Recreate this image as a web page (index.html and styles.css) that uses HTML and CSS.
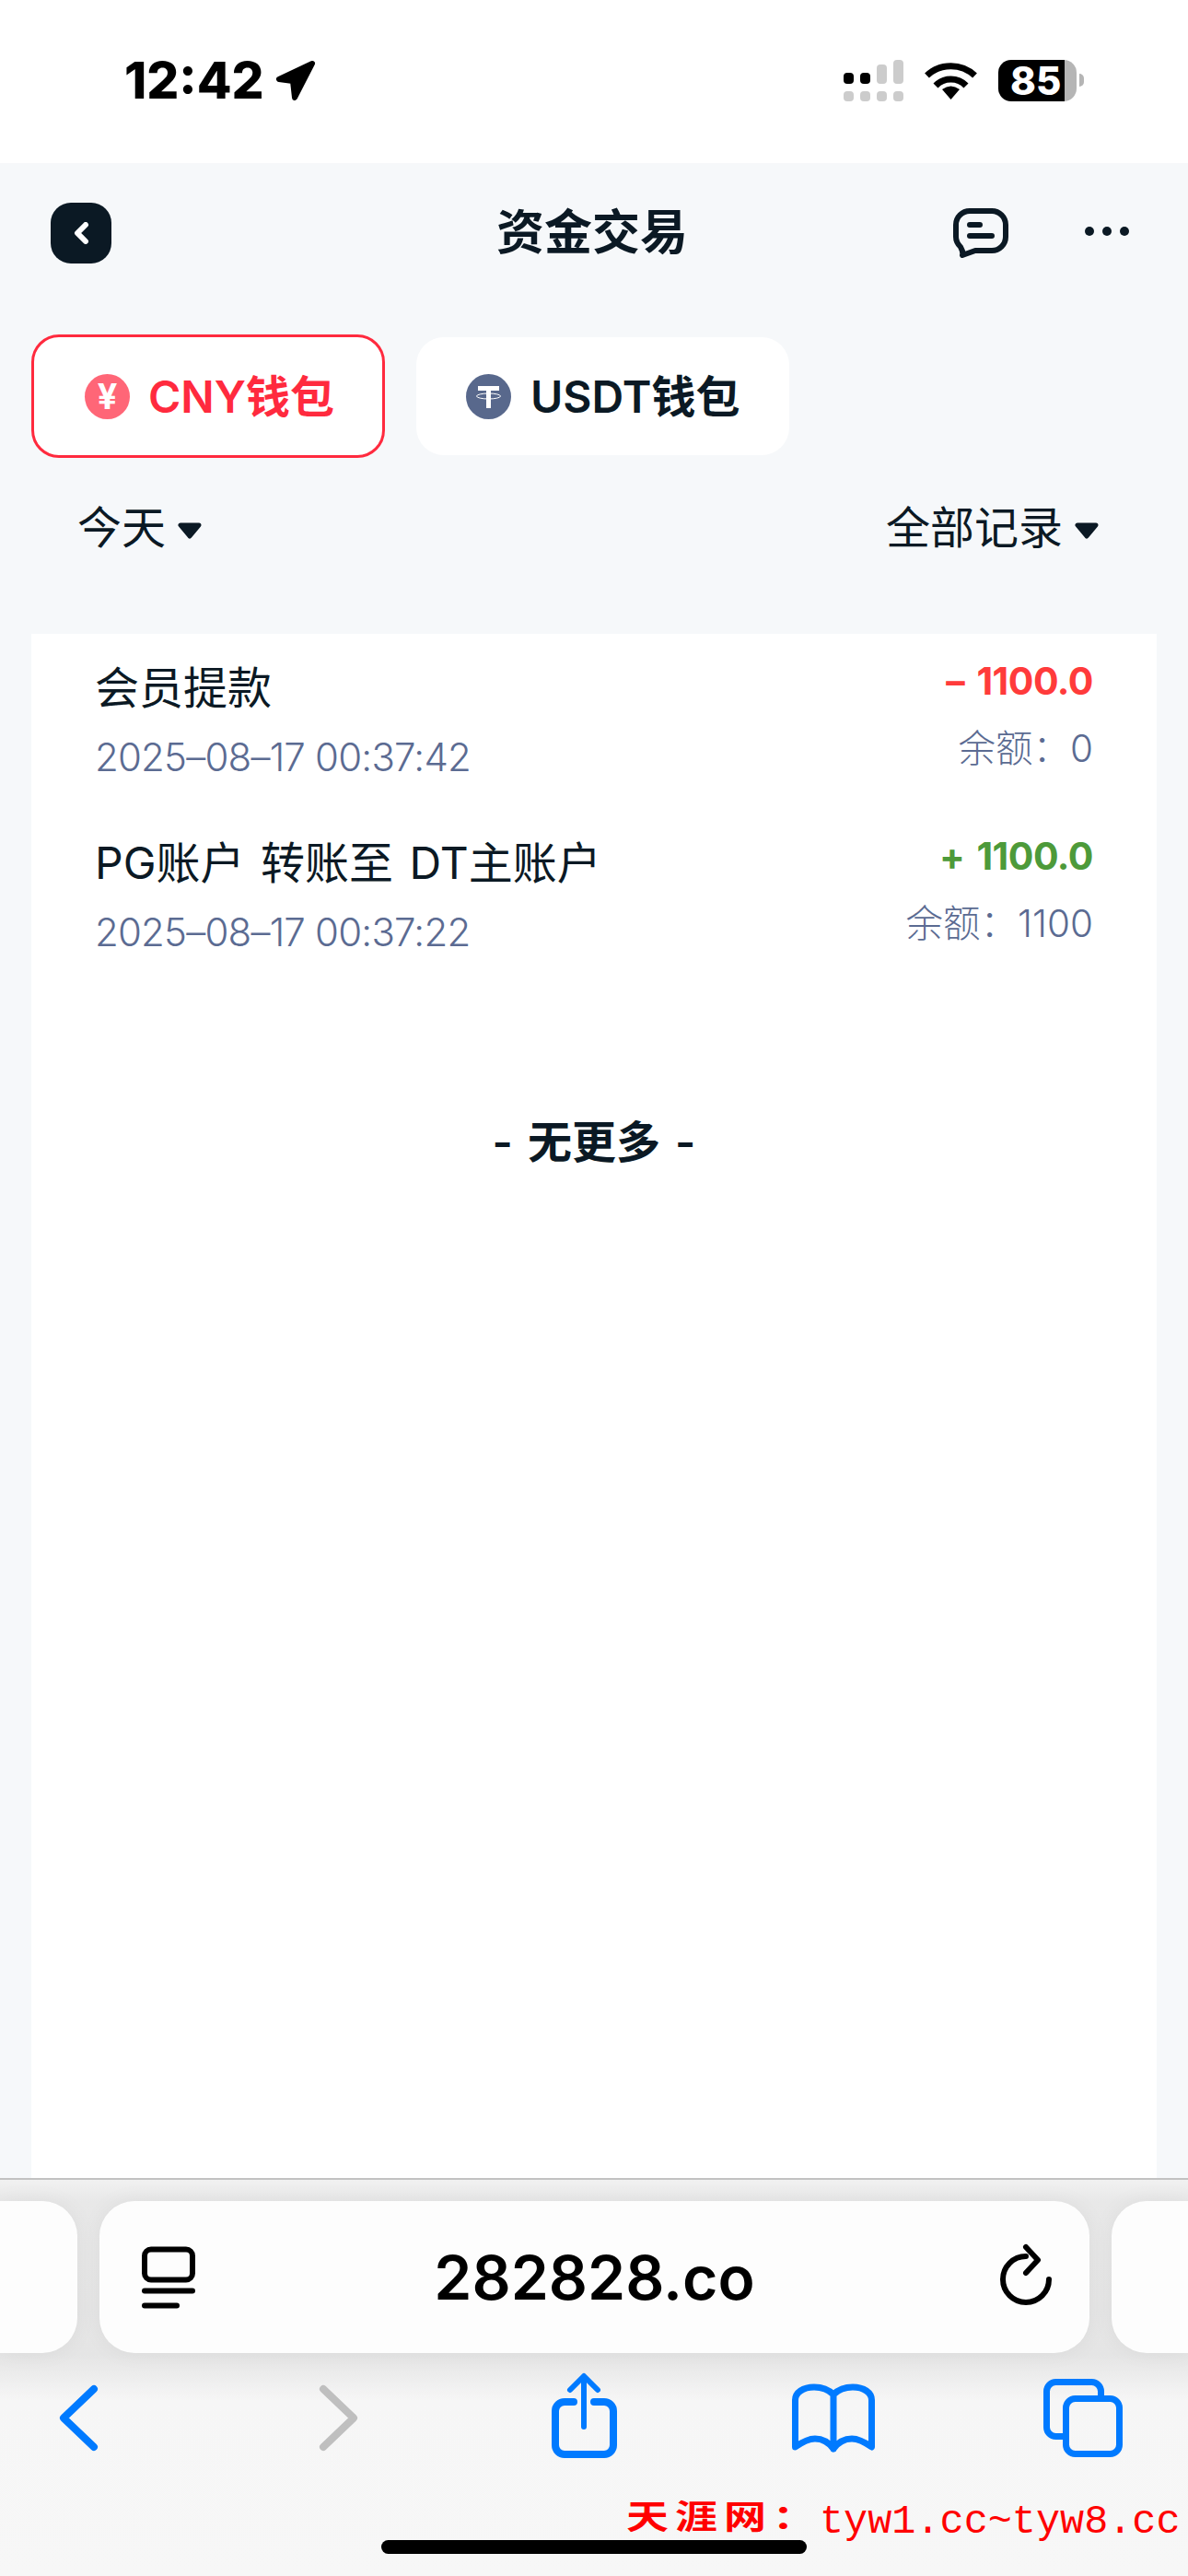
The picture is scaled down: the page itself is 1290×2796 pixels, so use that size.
FILE: index.html
```html
<!DOCTYPE html>
<html lang="zh-CN">
<head>
    <meta charset="UTF-8">
    <meta name="viewport" content="width=device-width, initial-scale=1.0">
    <title>资金交易</title>
    <link rel="stylesheet" href="styles.css">
</head>
<body>
    <div class="status-bar">
        <span class="clock">12:42</span>
        <svg class="location" viewBox="0 0 46 44"><polygon points="41,4 5,21 20,23 22,41"/></svg>
        <div class="status-right">
            <svg class="signal" viewBox="0 0 65 45">
                <rect x="0" y="14" width="11" height="12" rx="4" fill="#000"/>
                <rect x="18" y="14" width="11" height="12" rx="4" fill="#000"/>
                <rect x="36" y="5" width="11" height="21" rx="4" fill="#ccc"/>
                <rect x="54" y="0" width="11" height="26" rx="4" fill="#ccc"/>
                <rect x="0" y="34" width="11" height="11" rx="4" fill="#ccc"/>
                <rect x="18" y="34" width="11" height="11" rx="4" fill="#ccc"/>
                <rect x="36" y="34" width="11" height="11" rx="4" fill="#ccc"/>
                <rect x="54" y="34" width="11" height="11" rx="4" fill="#ccc"/>
            </svg>
            <svg class="wifi" viewBox="0 0 57 42">
                <path d="M2.5 16 A38 38 0 0 1 54.5 16" fill="none" stroke="#000" stroke-width="7"/>
                <path d="M12 27 A23 23 0 0 1 45 27" fill="none" stroke="#000" stroke-width="7"/>
                <path d="M28.5 42 L19 31 Q28.5 24 38 31 Z" fill="#000"/>
            </svg>
            <div class="battery">
                <div class="battery-body">85</div>
                <div class="battery-tip"></div>
            </div>
        </div>
    </div>

    <div class="page">
        <div class="header">
            <div class="back-button">
                <svg viewBox="0 0 17 24"><path d="M13 3 L4 12 L13 21" fill="none" stroke="#fff" stroke-width="6" stroke-linecap="round" stroke-linejoin="round"/></svg>
            </div>
            <h1 class="title">资金交易</h1>
            <div class="header-actions">
                <svg class="chat-icon" viewBox="0 0 60 54">
                    <path d="M18 3H42a15 15 0 0 1 15 15V31a15 15 0 0 1-15 15H24L10 51C11 48 10 46 8 42C4 38 3 35 3 31V18A15 15 0 0 1 18 3Z" fill="none" stroke="#0b1924" stroke-width="6" stroke-linejoin="round"/>
                    <path d="M18 18H29M18 30H42" fill="none" stroke="#0b1924" stroke-width="6" stroke-linecap="round"/>
                </svg>
                <div class="more-dots"><span></span><span></span><span></span></div>
            </div>
        </div>

        <div class="wallet-tabs">
            <div class="wallet-tab active">
                <span class="coin coin-cny">¥</span>
                <span class="tab-label">CNY钱包</span>
            </div>
            <div class="wallet-tab">
                <svg class="coin" viewBox="0 0 49 49">
                    <circle cx="24.5" cy="24.5" r="24.5" fill="#58688c"/>
                    <rect x="13" y="13" width="23" height="5" fill="#fff"/>
                    <rect x="22" y="13" width="5" height="24" fill="#fff"/>
                    <ellipse cx="24.5" cy="24" rx="13" ry="3" fill="none" stroke="#fff" stroke-width="1"/>
                </svg>
                <span class="tab-label">USDT钱包</span>
            </div>
        </div>

        <div class="filters">
            <div class="filter"><span class="filter-label">今天</span><svg class="caret" viewBox="0 0 26 18"><polygon points="3,3 23,3 13,15"/></svg></div>
            <div class="filter"><span class="filter-label">全部记录</span><svg class="caret" viewBox="0 0 26 18"><polygon points="3,3 23,3 13,15"/></svg></div>
        </div>

        <div class="record-list">
            <div class="record">
                <div>
                    <div class="record-name">会员提款</div>
                    <div class="record-date">2025–08–17 00:37:42</div>
                </div>
                <div class="record-right">
                    <div class="amount out">– 1100.0</div>
                    <div class="balance">余额：0</div>
                </div>
            </div>
            <div class="record">
                <div>
                    <div class="record-name">PG账户 转账至 DT主账户</div>
                    <div class="record-date">2025–08–17 00:37:22</div>
                </div>
                <div class="record-right">
                    <div class="amount in">+ 1100.0</div>
                    <div class="balance">余额：1100</div>
                </div>
            </div>
            <div class="no-more">- 无更多 -</div>
        </div>
    </div>

    <div class="toolbar">
        <div class="address-row">
            <div class="address-stub left"></div>
            <div class="address-bar">
                <svg class="address-icon" viewBox="0 0 64 72">
                    <rect x="7" y="5.5" width="52" height="33" rx="7" fill="none" stroke="#000" stroke-width="6"/>
                    <path d="M7 50.5H59M7 66.5H42" fill="none" stroke="#000" stroke-width="6" stroke-linecap="round"/>
                </svg>
                <span class="url">282828.co</span>
                <svg class="address-icon" viewBox="0 0 64 72">
                    <path d="M62 38A25 25 0 1 1 37 13" fill="none" stroke="#000" stroke-width="6" stroke-linecap="round"/>
                    <path d="M37 3L50 17L37 31" fill="none" stroke="#000" stroke-width="6" stroke-linecap="round" stroke-linejoin="round"/>
                </svg>
            </div>
            <div class="address-stub right"></div>
        </div>
        <div class="nav-row">
            <svg class="nav-icon" viewBox="0 0 100 100"><path d="M67 22L34 53.5L67 85" stroke="#007aff"/></svg>
            <svg class="nav-icon" viewBox="0 0 100 100"><path d="M34 22L67 53.5L34 85" stroke="#bfbfbf"/></svg>
            <svg class="nav-icon" viewBox="0 0 100 100">
                <path d="M39 36H29a10 10 0 0 0-10 10V83a10 10 0 0 0 10 10H72a10 10 0 0 0 10-10V46a10 10 0 0 0-10-10H61" stroke="#007aff"/>
                <path d="M50 63V9M35 23L50 8L65 23" stroke="#007aff" stroke-width="6"/>
            </svg>
            <svg class="nav-icon" viewBox="0 0 100 100">
                <path d="M50 28C44 22 36 20 29 20C17 20 8.500 26 8.500 34V85C17 79 24 76 30 76C38 76 45 80 50 87C55 80 62 76 70 76C76 76 83 79 91.500 85V34C91.500 26 83 20 71 20C64 20 56 22 50 28V87" stroke="#007aff" stroke-width="7"/>
            </svg>
            <svg class="nav-icon" viewBox="0 0 100 100">
                <path d="M69.500 32V24.500a10 10 0 0 0-10-10H20.500a10 10 0 0 0-10 10V63.500a10 10 0 0 0 10 10H28" stroke="#007aff" stroke-width="7"/>
                <rect x="31.500" y="32.500" width="58" height="60" rx="10" stroke="#007aff" stroke-width="7"/>
            </svg>
        </div>
    </div>

    <div class="watermark"><span class="watermark-name">天涯网：</span><span class="watermark-url">tyw1.cc~tyw8.cc</span></div>
    <div class="home-indicator"></div>
</body>
</html>
```

FILE: styles.css
```css
* {
    box-sizing: border-box;
}
html, body {
    margin: 0;
    padding: 0;
}
body {
    position: relative;
    width: 1290px;
    height: 2796px;
    overflow: hidden;
    display: flex;
    flex-direction: column;
    background-color: #f6f8fa;
    color: #0b1924;
    font-family: Inter, "Noto Sans CJK SC", sans-serif;
}

/* status bar */
.status-bar {
    flex: none;
    height: 177px;
    padding: 0 113px 3px 135px;
    display: flex;
    align-items: center;
    background-color: #fff;
    color: #000;
}
.clock {
    font-size: 55px;
    font-weight: 800;
    line-height: 1;
}
.location {
    width: 46px;
    height: 44px;
    margin-left: 11px;
}
.location polygon {
    fill: #000;
    stroke: #000;
    stroke-width: 6;
    stroke-linejoin: round;
}
.status-right {
    margin-left: auto;
    display: flex;
    align-items: center;
    gap: 23px;
}
.signal {
    width: 65px;
    height: 45px;
}
.wifi {
    width: 57px;
    height: 42px;
}
.battery {
    display: flex;
    align-items: center;
    gap: 3px;
}
.battery-body {
    width: 85px;
    height: 45px;
    padding-left: 13px;
    border-radius: 14px;
    background: linear-gradient(90deg, #000 72px, #b5b5b5 72px);
    color: #fff;
    font-size: 42px;
    font-weight: 800;
    line-height: 45px;
}
.battery-tip {
    width: 5px;
    height: 14px;
    border-radius: 0 5px 5px 0;
    background-color: #b5b5b5;
}

/* page */
.page {
    flex: 1;
    min-height: 0;
    display: flex;
    flex-direction: column;
}
.header {
    flex: none;
    height: 152px;
    padding: 0 64px 0 55px;
    display: grid;
    grid-template-columns: 484px 208px 1fr;
    align-items: center;
}
.back-button {
    width: 66px;
    height: 66px;
    border-radius: 22px;
    background-color: #0b1924;
    display: flex;
    align-items: center;
    justify-content: center;
}
.back-button svg {
    width: 17px;
    height: 24px;
}
.title {
    margin: 0;
    font-size: 52px;
    font-weight: 700;
    line-height: 1;
    white-space: nowrap;
}
.header-actions {
    display: flex;
    align-items: center;
    justify-content: flex-end;
    gap: 83px;
}
.chat-icon {
    width: 60px;
    height: 54px;
}
.more-dots {
    display: flex;
    gap: 9px;
    margin-bottom: 4px;
}
.more-dots span {
    width: 10px;
    height: 10px;
    border-radius: 50%;
    background-color: #0b1924;
}

.wallet-tabs {
    flex: none;
    margin-top: 34px;
    padding: 0 34px;
    height: 134px;
    display: flex;
    align-items: center;
    gap: 34px;
}
.wallet-tab {
    height: 128px;
    width: 405px;
    padding-left: 54px;
    border-radius: 30px;
    background-color: #fff;
    display: flex;
    align-items: center;
    gap: 21px;
    font-size: 48px;
    font-weight: 600;
}
.tab-label {
    margin-bottom: 6px;
}
.wallet-tab.active {
    width: 384px;
    height: 134px;
    padding-left: 55px;
    gap: 20px;
    border: 3px solid #ff2a3e;
    color: #ff2a3e;
}
.coin {
    flex: none;
    width: 49px;
    height: 49px;
}
.coin-cny {
    border-radius: 50%;
    background-color: #ff6677;
    color: #fff;
    font-size: 38px;
    font-weight: 700;
    line-height: 49px;
    text-align: center;
}

.filters {
    flex: none;
    height: 150px;
    padding: 0 97px 0 84px;
    display: flex;
    align-items: center;
    justify-content: space-between;
    font-size: 48px;
    margin-bottom: 41px;
}
.filter {
    display: flex;
    align-items: center;
    gap: 13px;
}
.filter-label {
    margin-bottom: 6px;
}
.caret {
    width: 26px;
    height: 18px;
    margin-top: 8px;
}
.caret polygon {
    fill: #0b1924;
    stroke: #0b1924;
    stroke-width: 5;
    stroke-linejoin: round;
}

/* records */
.record-list {
    flex: 1;
    margin: 0 34px;
    background-color: #fff;
}
.record {
    height: 190px;
    padding: 26px 69px 0 69px;
    display: flex;
    justify-content: space-between;
}
.record-name {
    font-size: 48px;
    line-height: 66px;
    word-spacing: 4px;
    white-space: nowrap;
}
.record-date {
    margin-top: 17px;
    color: #5b6b92;
    font-size: 42px;
    font-weight: 300;
    letter-spacing: -0.8px;
    line-height: 50px;
    white-space: nowrap;
}
.record-right {
    text-align: right;
}
.amount {
    margin-top: -3px;
    font-size: 41px;
    font-weight: 700;
    letter-spacing: -0.5px;
    word-spacing: 4px;
    line-height: 56px;
}
.amount.out {
    color: #ff3b3b;
}
.amount.in {
    color: #4d9a3a;
}
.balance {
    margin-top: 21px;
    color: #5b6b92;
    font-size: 40.5px;
    font-weight: 300;
    line-height: 50px;
    white-space: nowrap;
}
.no-more {
    margin-top: 142px;
    font-size: 48px;
    font-weight: 600;
    line-height: 60px;
    word-spacing: 4px;
    text-align: center;
}

/* browser toolbar */
.toolbar {
    flex: none;
    height: 432px;
    padding-top: 23px;
    border-top: 2px solid #c2c2c2;
    background: linear-gradient(180deg, #f1f1f1 0, #e8e8e8 24px, #e5e5e5 190px, #f6f6f6 240px, #f7f7f7 100%);
}
.address-row {
    height: 165px;
    display: grid;
    grid-template-columns: 84px 1fr 83px;
    gap: 24px;
}
.address-stub, .address-bar {
    background-color: #fdfdfd;
    box-shadow: 0 0 24px rgba(0, 0, 0, 0.05);
}
.address-stub.left {
    border-radius: 0 38px 38px 0;
}
.address-stub.right {
    border-radius: 38px 0 0 38px;
}
.address-bar {
    padding: 0 42px;
    border-radius: 38px;
    display: flex;
    align-items: center;
    justify-content: space-between;
}
.address-icon {
    width: 64px;
    height: 72px;
    overflow: visible;
}
.url {
    color: #000;
    font-size: 66px;
    font-weight: 600;
    line-height: 1;
}
.nav-row {
    margin-top: 17px;
    padding-left: 35px;
    display: grid;
    grid-template-columns: 282px 267px 271px 271px 199px;
}
.nav-icon {
    width: 100px;
    height: 100px;
    fill: none;
    stroke-width: 8;
    stroke-linecap: round;
    stroke-linejoin: round;
}
.watermark {
    position: absolute;
    left: 680px;
    top: 2704px;
    display: flex;
    align-items: center;
    color: #f00;
    white-space: nowrap;
}
.watermark-name {
    width: 210px;
    font-family: "Noto Sans CJK SC", sans-serif;
    font-size: 46px;
    font-weight: 700;
    letter-spacing: 7px;
    transform: translateY(-8px) scaleY(0.78);
}
.watermark-url {
    font-family: "Liberation Mono", monospace;
    font-size: 43.5px;
}
.home-indicator {
    position: absolute;
    left: 414px;
    top: 2757px;
    width: 462px;
    height: 15px;
    border-radius: 8px;
    background-color: #000;
}
```
